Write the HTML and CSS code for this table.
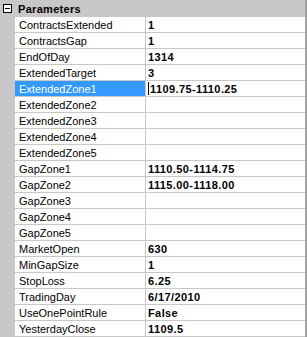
FILE: index.html
```html
<!DOCTYPE html>
<html lang="en">
<head>
    <meta charset="UTF-8" />
    <title>Parameters</title>
    <link rel="stylesheet" href="styles.css">
</head>
<body>
    <div class="grid">
        <div class="category">
            <span class="toggle"></span>
            <span class="category-name">Parameters</span>
        </div>

        <div class="row"><span class="gutter"></span><span class="name">ContractsExtended</span><span class="value">1</span></div>
        <div class="row"><span class="gutter"></span><span class="name">ContractsGap</span><span class="value">1</span></div>
        <div class="row"><span class="gutter"></span><span class="name">EndOfDay</span><span class="value">1314</span></div>
        <div class="row"><span class="gutter"></span><span class="name">ExtendedTarget</span><span class="value">3</span></div>
        <div class="row selected"><span class="gutter"></span><span class="name">ExtendedZone1</span><span class="value"><span class="caret"></span>1109.75-1110.25</span></div>
        <div class="row"><span class="gutter"></span><span class="name">ExtendedZone2</span><span class="value"></span></div>
        <div class="row"><span class="gutter"></span><span class="name">ExtendedZone3</span><span class="value"></span></div>
        <div class="row"><span class="gutter"></span><span class="name">ExtendedZone4</span><span class="value"></span></div>
        <div class="row"><span class="gutter"></span><span class="name">ExtendedZone5</span><span class="value"></span></div>
        <div class="row"><span class="gutter"></span><span class="name">GapZone1</span><span class="value">1110.50-1114.75</span></div>
        <div class="row"><span class="gutter"></span><span class="name">GapZone2</span><span class="value">1115.00-1118.00</span></div>
        <div class="row"><span class="gutter"></span><span class="name">GapZone3</span><span class="value"></span></div>
        <div class="row"><span class="gutter"></span><span class="name">GapZone4</span><span class="value"></span></div>
        <div class="row"><span class="gutter"></span><span class="name">GapZone5</span><span class="value"></span></div>
        <div class="row"><span class="gutter"></span><span class="name">MarketOpen</span><span class="value">630</span></div>
        <div class="row"><span class="gutter"></span><span class="name">MinGapSize</span><span class="value">1</span></div>
        <div class="row"><span class="gutter"></span><span class="name">StopLoss</span><span class="value">6.25</span></div>
        <div class="row"><span class="gutter"></span><span class="name">TradingDay</span><span class="value">6/17/2010</span></div>
        <div class="row"><span class="gutter"></span><span class="name">UseOnePointRule</span><span class="value">False</span></div>
        <div class="row"><span class="gutter"></span><span class="name">YesterdayClose</span><span class="value">1109.5</span></div>
    </div>
</body>
</html>
```

FILE: styles.css
```css
body {
    margin: 0;
    padding: 0;
    background-color: #fff;
    font-family: 'Liberation Sans', Arial, sans-serif;
    font-size: 11px;
    color: #000;
}

.grid {
    width: 305px;
    height: 337px;
    border-right: 2px solid #a0a0a0;
    overflow: hidden;
    background-color: #fff;
}

.category {
    display: flex;
    align-items: center;
    height: 17px;
    background-color: #c8c8c8;
}

.toggle {
    position: relative;
    box-sizing: border-box;
    width: 9px;
    height: 9px;
    margin: 0 5px 0 3px;
    border: 1px solid #000;
    background-color: #fff;
}

/* minus sign inside the expander box */
.toggle::after {
    content: '';
    position: absolute;
    left: 1px;
    right: 1px;
    top: 3px;
    height: 1px;
    background-color: #000;
}

.category-name {
    font-weight: bold;
    padding-left: 1px;
    letter-spacing: 0.3px;
}

.row {
    display: grid;
    grid-template-columns: 15px 131px 1fr;
    height: 16px;
}

.gutter {
    background-color: #c8c8c8;
}

.name,
.value {
    display: flex;
    align-items: center;
    box-sizing: border-box;
    border-bottom: 1px solid #c8c8c8;
    white-space: nowrap;
    overflow: hidden;
}

.name {
    padding-left: 4px;
    border-right: 1px solid #c8c8c8;
}

.value {
    padding-left: 2px;
    font-weight: bold;
    letter-spacing: 0.4px;
}

.selected .name {
    background-color: #3399ff;
    color: #fff;
}

.caret {
    display: inline-block;
    width: 1px;
    height: 13px;
    margin-right: 1px;
    background-color: #000;
}
```
